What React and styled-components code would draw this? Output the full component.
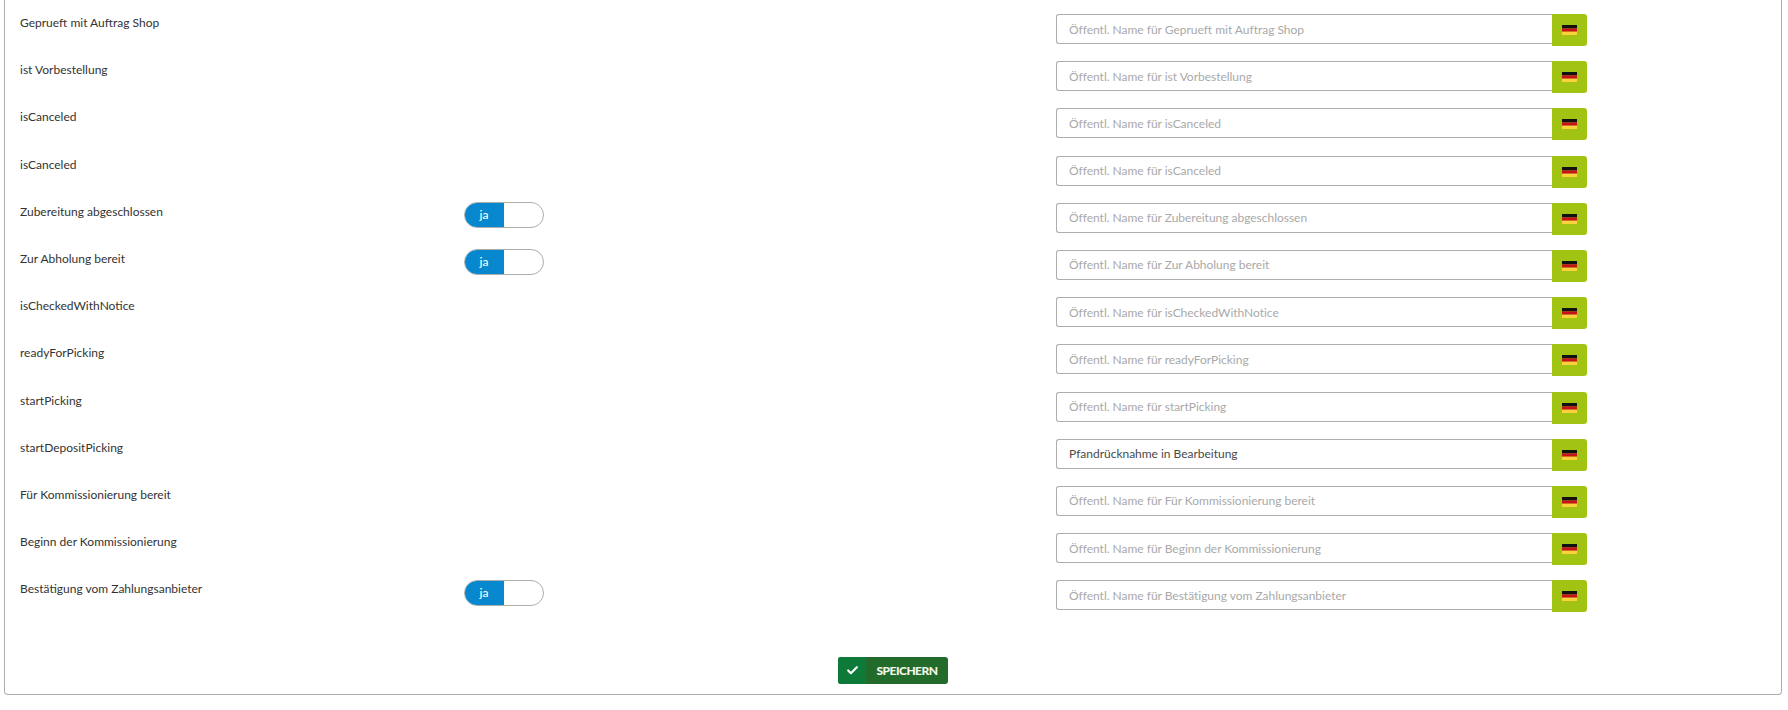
import React from 'react'
import styled, { createGlobalStyle } from 'styled-components'
import { Check } from 'lucide-react'

const GlobalStyle = createGlobalStyle`
  html, body {
    margin: 0;
    padding: 0;
    background: #fff;
    font-family: Lato, 'Open Sans', sans-serif;
    font-size: 12px;
    color: #333;
  }
`

const Panel = styled.form`
  box-sizing: border-box;
  width: 1778px;
  height: 695px;
  margin-left: 4px;
  padding: 14px 0 0 15px;
  border: 1px solid #adadad;
  border-top: 0;
  border-radius: 0 0 4px 4px;
`

const Row = styled.div`
  display: grid;
  grid-template-columns: 444px 592px 531px;
  align-items: start;
  height: 47.2px;
`

const Label = styled.label`
  padding-top: 1px;
  line-height: 15px;
  color: #333;
`

const Toggle = styled.div`
  box-sizing: border-box;
  display: flex;
  width: 80px;
  height: 26px;
  margin-top: -0.5px;
  border: 1px solid #adadad;
  border-radius: 13px;
  overflow: hidden;
`

const ToggleOn = styled.span`
  width: 40px;
  margin: -1px 0 -1px -1px;
  background: #0788ce;
  color: #fff;
  font-weight: 500;
  line-height: 26px;
  text-align: center;
`

const InputGroup = styled.div`
  display: flex;
  align-items: flex-start;
`

const NameInput = styled.input`
  box-sizing: border-box;
  flex: 1;
  min-width: 0;
  height: 30px;
  padding: 0 12px;
  border: 1px solid #adadad;
  border-right: 0;
  border-radius: 3px 0 0 3px;
  outline: 0;
  background: #fff;
  color: #4a4a4a;
  font: 12px Lato, sans-serif;
  letter-spacing: -0.02px;

  &::placeholder {
    color: #a9a9a9;
    opacity: 1;
  }
`

const FlagButton = styled.button`
  display: flex;
  align-items: center;
  justify-content: center;
  width: 35px;
  height: 32px;
  padding: 0;
  border: 0;
  border-radius: 0 3px 3px 0;
  background: #a1c413;
`

const Flag = () => (
  <svg width="15" height="10" viewBox="0 0 15 10" aria-hidden="true">
    <rect width="15" height="3.4" fill="#111" />
    <rect y="3.4" width="15" height="3.3" fill="#c5121c" />
    <rect y="6.7" width="15" height="3.3" fill="#fbd13e" />
  </svg>
)

const Footer = styled.div`
  display: flex;
  justify-content: center;
  margin-top: 30px;
  padding-right: 15px;
`

const SaveButton = styled.button`
  display: flex;
  width: 110px;
  height: 27px;
  padding: 0;
  border: 0;
  border-radius: 3px;
  overflow: hidden;
  background: #226b2a;
  color: #f2f7ea;
  font: 900 12px Lato, sans-serif;
  letter-spacing: -0.55px;
`

const SaveIcon = styled.span`
  display: flex;
  justify-content: center;
  width: 28px;
  height: 100%;
  padding-top: 7px;
  box-sizing: border-box;
  background: #0e7a3a;
`

const SaveText = styled.span`
  flex: 1;
  line-height: 28px;
  text-align: center;
`

const rows = [
  { label: 'Geprueft mit Auftrag Shop' },
  { label: 'ist Vorbestellung' },
  { label: 'isCanceled' },
  { label: 'isCanceled' },
  { label: 'Zubereitung abgeschlossen', toggle: true },
  { label: 'Zur Abholung bereit', toggle: true },
  { label: 'isCheckedWithNotice' },
  { label: 'readyForPicking' },
  { label: 'startPicking' },
  { label: 'startDepositPicking', value: 'Pfandrücknahme in Bearbeitung' },
  { label: 'Für Kommissionierung bereit' },
  { label: 'Beginn der Kommissionierung' },
  { label: 'Bestätigung vom Zahlungsanbieter', toggle: true },
]

const App = () => (
  <>
    <GlobalStyle />
    <Panel>
      {rows.map((row, i) => (
        <Row key={i}>
          <Label>{row.label}</Label>
          <div>
            {row.toggle && (
              <Toggle>
                <ToggleOn>ja</ToggleOn>
              </Toggle>
            )}
          </div>
          <InputGroup>
            <NameInput
              placeholder={`Öffentl. Name für ${row.label}`}
              defaultValue={row.value}
            />
            <FlagButton type="button">
              <Flag />
            </FlagButton>
          </InputGroup>
        </Row>
      ))}
      <Footer>
        <SaveButton type="button">
          <SaveIcon>
            <Check size={13} strokeWidth={4} color="#fff" />
          </SaveIcon>
          <SaveText>SPEICHERN</SaveText>
        </SaveButton>
      </Footer>
    </Panel>
  </>
)

export default App
